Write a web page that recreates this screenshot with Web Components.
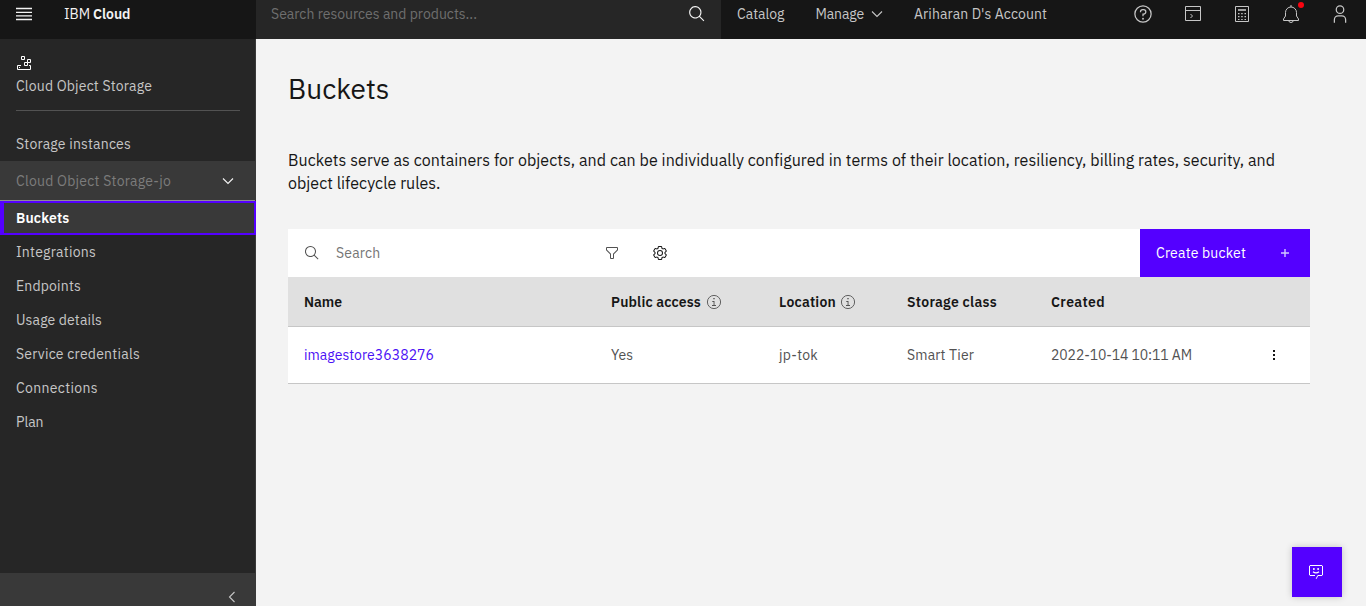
<!DOCTYPE html>
<html lang="en">
<head>
<meta charset="utf-8">
<title>Buckets - IBM Cloud</title>
<style>
html,body{margin:0;height:100%;overflow:hidden}
body{font-family:"IBM Plex Sans",Roboto,"Liberation Sans",sans-serif;font-size:14px;line-height:18px;background:#f3f3f3;color:#161616}
</style>
</head>
<body>
<cloud-app></cloud-app>
<script>
const ICONS = {
  menu:`<path fill="none" stroke="#f4f4f4" stroke-width="1.3" d="M0 2.5h16M0 6.3h16M0 9.8h16M0 13.5h16"/>`,
  search:`<path transform="scale(.5)" d="M29,27.5859l-7.5521-7.5521a11.0177,11.0177,0,1,0-1.4141,1.4141L27.5859,29ZM4,13a9,9,0,1,1,9,9A9.01,9.01,0,0,1,4,13Z"/>`,
  chevron:`<path fill="none" stroke="currentColor" stroke-width="1.1" d="M3 5.5l5 5 5-5"/>`,
  left:`<path fill="none" stroke="currentColor" stroke-width="1.1" d="M10.5 3l-5 5 5 5"/>`,
  help:`<g transform="scale(.5)"><path d="M16,2A14,14,0,1,0,30,16,14,14,0,0,0,16,2Zm0,26A12,12,0,1,1,28,16,12,12,0,0,1,16,28Z"/><circle cx="16" cy="23.5" r="1.5"/><path d="M17,8H15.5A4.49,4.49,0,0,0,11,12.5V13h2v-.5A2.5,2.5,0,0,1,15.5,10H17a2.5,2.5,0,0,1,0,5H15v4.5h2V17a4.5,4.5,0,0,0,0-9Z"/></g>`,
  shell:`<path fill="none" stroke="currentColor" d="M.5 .5h15v14H.5zM.5 4.500h15M5.500 8l2 2-2 2"/>`,
  calc:`<path fill="none" stroke="currentColor" d="M1.5.5h13v15h-13z"/><path fill="none" stroke="currentColor" stroke-width="1.6" d="M4 4h8"/><path d="M4 7h1.5v1.3H4zM7.2 7h1.5v1.3H7.2zM10.5 7H12v1.3h-1.5zM4 10h1.5v1.3H4zM7.2 10h1.5v1.3H7.2zM10.5 10H12v1.3h-1.5zM4 13h1.5v1.1H4zM7.2 13h1.5v1.1H7.2zM10.5 13H12v1.1h-1.5z"/>`,
  bell:`<path fill="none" stroke="currentColor" d="M9 0v2M1.500 15.500h15V14L14.500 11V7.500A5.500 5.500 0 0 0 3.500 7.500V11L1.500 14zM6.800 15.500a2.200 2 0 0 0 4.400 0"/>`,
  user:`<g transform="scale(.5)"><path d="M16,4a5,5,0,1,1-5,5,5,5,0,0,1,5-5m0-2a7,7,0,1,0,7,7A7,7,0,0,0,16,2Z"/><path d="M26,30H24V25a5,5,0,0,0-5-5H13a5,5,0,0,0-5,5v5H6V25a7,7,0,0,1,7-7h6a7,7,0,0,1,7,7Z"/></g>`,
  storage:`<path fill="none" stroke="currentColor" d="M5.500 1.500h3v3h-3zM11.500 4.500h3v3h-3zM8.500 7.500h3v3h-3zM5 10.500H1.500v4h13v-4H13"/><path d="M3 12h1v1H3z"/>`,
  filter:`<path transform="scale(.5)" d="M18,28H14a2,2,0,0,1-2-2V18.41L4.590,11A2,2,0,0,1,4,9.590V6A2,2,0,0,1,6,4H26a2,2,0,0,1,2,2V9.590A2,2,0,0,1,27.410,11L20,18.410V26A2,2,0,0,1,18,28ZM6,6V9.590l8,8V26h4V17.590l8-8V6Z"/>`,
  settings:`<path transform="scale(.5)" d="M27,16.76c0-.25,0-.5,0-.76s0-.51,0-.77l1.920-1.680A2,2,0,0,0,29.300,11L26.940,7a2,2,0,0,0-1.730-1,2,2,0,0,0-.64.1l-2.430.82a11.350,11.350,0,0,0-1.310-.75l-.51-2.520a2,2,0,0,0-2-1.610H13.640a2,2,0,0,0-2,1.610l-.51,2.520a11.480,11.480,0,0,0-1.320.75L7.430,6.060A2,2,0,0,0,6.790,6,2,2,0,0,0,5.060,7L2.700,11a2,2,0,0,0,.41,2.510L5,15.240c0,.25,0,.5,0,.76s0,.51,0,.77L3.110,18.450A2,2,0,0,0,2.700,21L5.060,25a2,2,0,0,0,1.730,1,2,2,0,0,0,.64-.1l2.430-.82a11.350,11.350,0,0,0,1.310.75l.51,2.520a2,2,0,0,0,2,1.610h4.720a2,2,0,0,0,2-1.610l.51-2.520a11.480,11.480,0,0,0,1.320-.75l2.420.82a2,2,0,0,0,.64.1,2,2,0,0,0,1.730-1L29.300,21a2,2,0,0,0-.41-2.510ZM25.210,24l-3.430-1.160a8.860,8.860,0,0,1-2.710,1.570L18.360,28H13.640l-.71-3.550a9.360,9.360,0,0,1-2.700-1.570L6.790,24,4.430,20l2.720-2.400a8.900,8.900,0,0,1,0-3.130L4.430,12,6.790,8l3.430,1.160a8.860,8.860,0,0,1,2.710-1.570L13.640,4h4.720l.71,3.550a9.360,9.360,0,0,1,2.700,1.570L25.210,8,27.570,12l-2.720,2.400a8.900,8.900,0,0,1,0,3.130L27.570,20ZM16,22a6,6,0,1,1,6-6A5.940,5.940,0,0,1,16,22Zm0-10a3.910,3.910,0,0,0-4,4,3.910,3.910,0,0,0,4,4,3.910,3.910,0,0,0,4-4A3.910,3.910,0,0,0,16,12Z"/>`,
  info:`<circle cx="8" cy="8" r="6.600" fill="none" stroke="currentColor" stroke-width=".9"/><path d="M8.500 11V7H6.300v.9h1.300V11H6v.9h4V11zM7.300 4h1.400v1.300H7.300z"/>`,
  plus:`<path d="M7.300 4h1.400v3.300H12v1.400H8.700V12H7.300V8.700H4V7.300h3.300z"/>`,
  overflow:`<path d="M7 3h2v2H7zM7 7h2v2H7zM7 11h2v2H7z"/>`,
  chat:`<path fill="none" stroke="currentColor" d="M8.200 14.800l1.600-3.300H14l.5-.5V2l-.5-.5H2l-.5.5v9l.5.5h5"/><path d="M5 4h1.700v2H5zM9.300 4H11v2H9.300z" opacity=".85"/><path fill="none" stroke="currentColor" stroke-width="1.2" d="M5 7.700q3 2.500 6 0"/>`
};
const define = (name, html, after) => {
  const template = document.createElement('template');
  template.innerHTML = html;
  customElements.define(name, class extends HTMLElement {
    constructor(){ super(); this.attachShadow({mode:'open'}).append(template.content.cloneNode(true)); }
    connectedCallback(){ if (after) after(this); }
  });
};

define('cds-icon', `<style>:host{display:block;flex:none}svg{display:block;overflow:visible}</style><svg fill="currentColor"></svg>`, el => {
  const s = +el.getAttribute('size') || 16, svg = el.shadowRoot.querySelector('svg');
  const name = el.getAttribute('name'), box = name === 'bell' ? 18 : 16;
  svg.setAttribute('width', s); svg.setAttribute('height', s);
  svg.setAttribute('viewBox', `0 0 ${box} ${box}`);
  svg.innerHTML = ICONS[name];
});

/* Label whose tracking is adjusted so its line measures the "w" attribute. */
define('cds-text', `<style>:host{display:block;white-space:nowrap;width:max-content;flex:none}</style><slot></slot>`, el => {
  const w = +el.getAttribute('w');
  const fit = () => {
    el.style.letterSpacing = '0px';
    const natural = el.getBoundingClientRect().width;
    if (natural) el.style.letterSpacing = ((w - natural) / el.textContent.length) + 'px';
  };
  if (w) queueMicrotask(fit);
});

define('cloud-header', `<style>
:host{display:flex;height:39px;background:#161616;color:#c6c6c6}
.brand{width:256px;display:flex;align-items:center;padding:0 0 11px 16px;box-sizing:border-box;color:#f3f3f3}
.brand cds-icon{margin-right:32px}
.name{display:flex;gap:3px;padding-bottom:1px}
.search{width:465px;box-sizing:border-box;padding:0 15px 11px 15px;background:#262626;display:flex;align-items:center;justify-content:space-between;color:#6f6f6f}
.search cds-icon{color:#f4f4f4}
nav{display:flex;align-items:center;padding:0 0 11px 16px}
nav cds-text{padding-bottom:1px}
.manage{margin:0 5px 0 31px}
.account{margin-left:29px}
.tools{margin-left:auto;display:flex;align-items:center;padding:0 16px 11px 0}
.tools>*{margin-left:30px}
.bell{position:relative}
.bell i{position:absolute;width:6px;height:6px;border-radius:50%;background:#fa0410;left:16px;top:-3px}
</style>
<div class="brand"><cds-icon name="menu"></cds-icon><div class="name"><cds-text w="26">IBM</cds-text><cds-text w="37.5" style="font-weight:600">Cloud</cds-text></div></div>
<div class="search"><cds-text w="206">Search resources and products...</cds-text><cds-icon name="search" size="18"></cds-icon></div>
<nav><cds-text w="47.5">Catalog</cds-text><cds-text class="manage" w="48.5">Manage</cds-text><cds-icon name="chevron"></cds-icon><cds-text class="account" w="133">Ariharan D's Account</cds-text></nav>
<div class="tools"><cds-icon name="help" size="20"></cds-icon><cds-icon name="shell" style="margin-left:32px"></cds-icon><cds-icon name="calc" style="margin-left:33px"></cds-icon><span class="bell" style="margin-left:32px"><cds-icon name="bell" size="18"></cds-icon><i></i></span><cds-icon name="user" size="20"></cds-icon></div>`);

define('nav-item', `<style>
:host{display:flex;align-items:center;height:34px;padding-left:16px;color:#c6c6c6}
:host([current]){background:#393939;color:#fff;font-weight:600;border:solid #5400ff;border-width:2px 2px 2px 4px;box-sizing:border-box;padding-left:12px;margin-right:-1px}
</style><slot></slot>`);

define('cloud-sidebar', `<style>
:host{display:flex;flex-direction:column;width:256px;box-sizing:border-box;background:#262626;border-right:1px solid #393939;color:#c6c6c6}
.service{margin:0 15px 0 16px;padding-top:16px;height:55px;border-bottom:1px solid #525252}
.service cds-icon{color:#fff;margin-bottom:6px}
.first{margin-top:16px}
.instance{display:flex;align-items:center;justify-content:space-between;height:39px;padding:0 19px 0 16px;background:#393939;border-bottom:1px solid #8d8d8d}
.instance cds-text{color:#7c7c7c}
.collapse{margin-top:auto;height:33px;background:#393939;display:flex;justify-content:flex-end;padding:16px 15px 0;box-sizing:border-box}
</style>
<div class="service"><cds-icon name="storage"></cds-icon><cds-text w="136">Cloud Object Storage</cds-text></div>
<nav-item class="first"><cds-text w="115">Storage instances</cds-text></nav-item>
<div class="instance"><cds-text w="155">Cloud Object Storage-jo</cds-text><cds-icon name="chevron" style="color:#f4f4f4"></cds-icon></div>
<nav-item current><cds-text w="53.5">Buckets</cds-text></nav-item>
<nav-item><cds-text w="80">Integrations</cds-text></nav-item>
<nav-item><cds-text w="65">Endpoints</cds-text></nav-item>
<nav-item><cds-text w="86">Usage details</cds-text></nav-item>
<nav-item><cds-text w="124">Service credentials</cds-text></nav-item>
<nav-item><cds-text w="82">Connections</cds-text></nav-item>
<nav-item><cds-text w="27.5">Plan</cds-text></nav-item>
<div class="collapse"><cds-icon name="left"></cds-icon></div>`);

define('bucket-toolbar', `<style>
:host{display:flex;height:48px;background:#fff;align-items:center;color:#525252}
.q{width:258px;margin-left:16px;color:#757575}
.create{margin-left:auto;width:170px;height:48px;box-sizing:border-box;padding:0 17px 0 16px;background:#5400ff;color:#fff;display:flex;align-items:center;justify-content:space-between}
.create cds-icon{color:#d0c8ff}
</style>
<cds-icon name="search" style="margin-left:16px"></cds-icon><div class="q"><cds-text w="44.5">Search</cds-text></div>
<cds-icon name="filter" style="margin-left:10px"></cds-icon><cds-icon name="settings" style="margin-left:32px;color:#161616"></cds-icon>
<div class="create"><cds-text w="90">Create bucket</cds-text><cds-icon name="plus"></cds-icon></div>`);

define('table-row', `<style>
:host{display:grid;grid-template-columns:307px 168px 128px 144px 1fr 44px;align-items:center;padding-left:16px;height:56px;background:#fff;border-bottom:1px solid #c6c6c6;color:#525252}
:host([head]){height:49px;background:#e0e0e0;color:#161616;font-weight:600}
</style><slot></slot>`);

define('buckets-table', `<style>
:host{display:block}
div{display:flex;align-items:center;gap:5px}
div cds-icon{color:#525252}
.link{color:#4a10f5}
</style>
<bucket-toolbar></bucket-toolbar>
<table-row head><cds-text w="38">Name</cds-text><div><cds-text w="90">Public access</cds-text><cds-icon name="info"></cds-icon></div><div style="gap:4px"><cds-text w="57">Location</cds-text><cds-icon name="info"></cds-icon></div><cds-text w="90">Storage class</cds-text><cds-text w="54">Created</cds-text></table-row>
<table-row><cds-text class="link" w="130">imagestore3638276</cds-text><cds-text w="22">Yes</cds-text><cds-text w="39">jp-tok</cds-text><cds-text w="67">Smart Tier</cds-text><cds-text w="141">2022-10-14 10:11 AM</cds-text><cds-icon name="overflow" style="color:#161616"></cds-icon></table-row>`);

define('buckets-page', `<style>
:host{display:block;flex:1;padding:32px 56px 0 32px;background:#f3f3f3}
h1{font-size:28px;line-height:36px;font-weight:400;margin:0 0 42px}
p{font-size:16px;line-height:23px;margin:0 0 34px}
</style>
<h1><cds-text w="101.5">Buckets</cds-text></h1>
<p><cds-text w="987">Buckets serve as containers for objects, and can be individually configured in terms of their location, resiliency, billing rates, security, and</cds-text><cds-text w="152.5">object lifecycle rules.</cds-text></p>
<buckets-table></buckets-table>`);

define('chat-launcher', `<style>
:host{position:fixed;right:24px;bottom:9px;width:50px;height:50px;background:#5400ff;color:#fff;display:flex;align-items:center;justify-content:center;box-shadow:0 0 7px rgba(0,0,0,.2)}
</style><cds-icon name="chat" style="margin-right:2px"></cds-icon>`);

define('cloud-app', `<style>
:host{display:flex;flex-direction:column;height:100vh}
main{display:flex;flex:1;min-height:0}
</style><cloud-header></cloud-header><main><cloud-sidebar></cloud-sidebar><buckets-page></buckets-page></main><chat-launcher></chat-launcher>`);
</script>
</body>
</html>
